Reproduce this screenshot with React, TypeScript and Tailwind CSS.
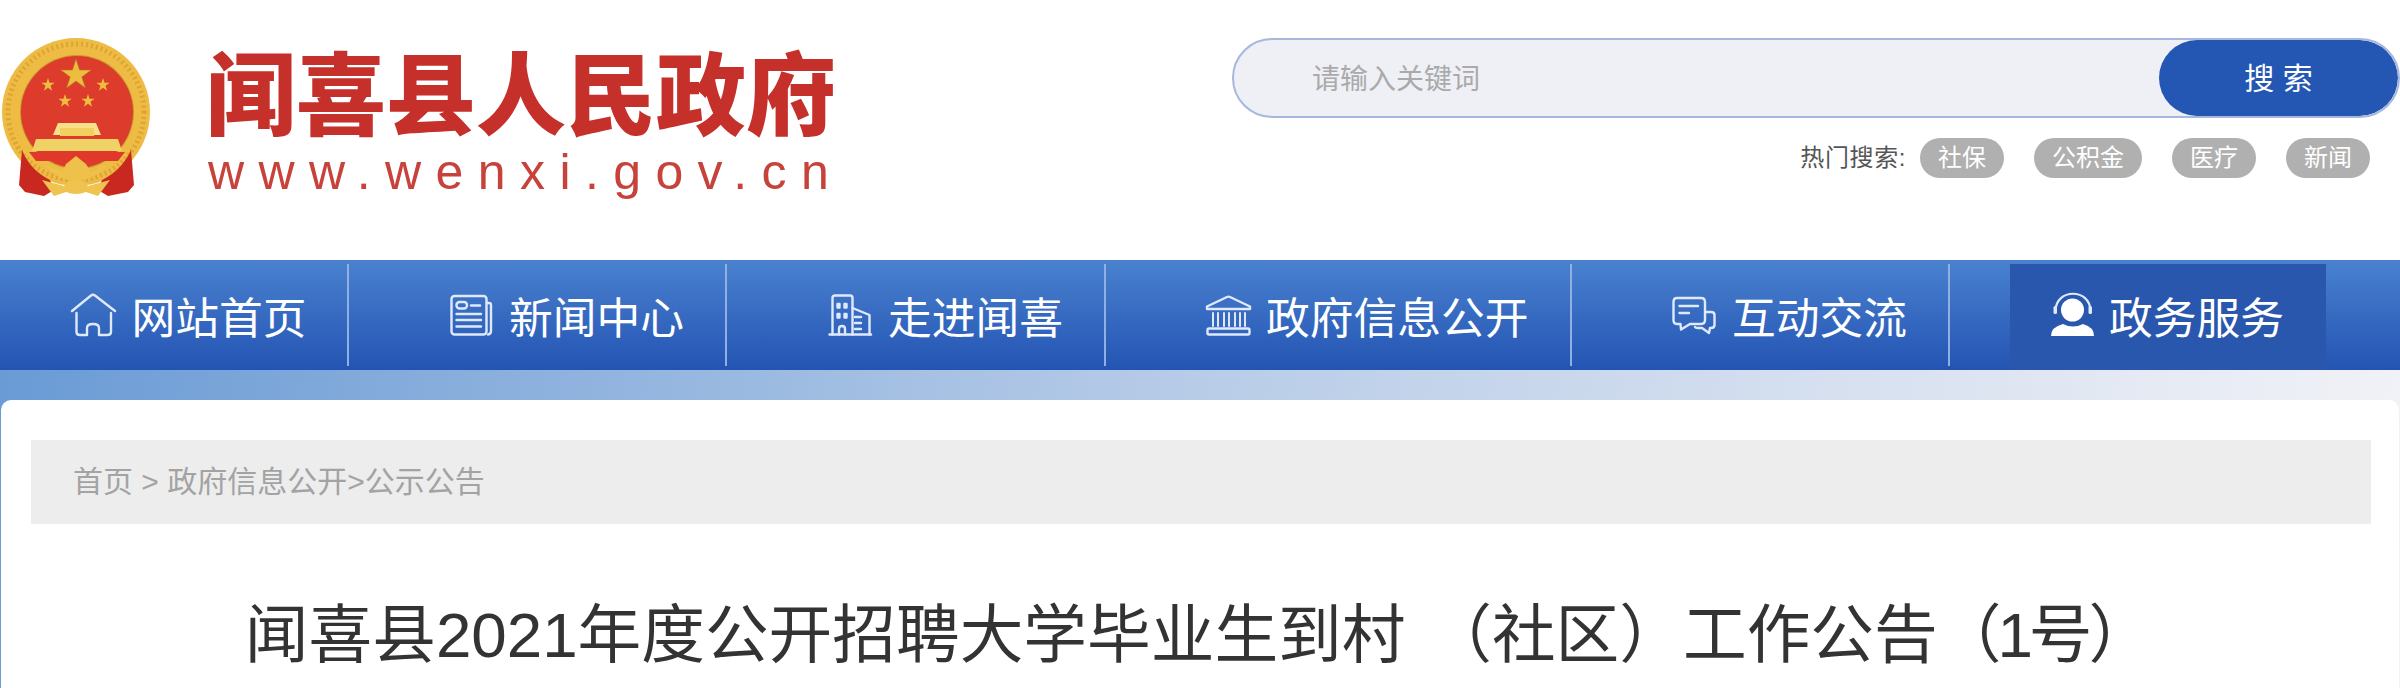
const FONT = "font-['Liberation_Sans','Noto_Sans_CJK_SC',sans-serif]";

function starPoints(cx: number, cy: number, r: number, rot = 0) {
  const pts: string[] = [];
  for (let i = 0; i < 10; i++) {
    const rad = i % 2 === 0 ? r : r * 0.38;
    const a = -Math.PI / 2 + (i * Math.PI) / 5 + rot;
    pts.push(`${(cx + rad * Math.cos(a)).toFixed(2)},${(cy + rad * Math.sin(a)).toFixed(2)}`);
  }
  return pts.join(" ");
}

function Emblem() {
  return (
    <svg viewBox="2 18 148 162" className="w-[148px] h-[162px] ml-[2px] shrink-0 blur-[0.7px]">
      <circle cx="76" cy="92" r="74" fill="#eebc45" />
      <circle cx="76" cy="92" r="68" fill="none" stroke="#dca52f" strokeWidth="5" strokeDasharray="2 3" />
      <circle cx="77" cy="92" r="57" fill="#c9962c" />
      <circle cx="77" cy="92" r="56" fill="#dd3b2c" />
      <polygon points={starPoints(76, 55, 16)} fill="#eebc3f" stroke="#a9801f" strokeWidth="0.6" />
      <polygon points={starPoints(48, 65, 7)} fill="#eebc3f" />
      <polygon points={starPoints(103, 65, 7)} fill="#eebc3f" />
      <polygon points={starPoints(65, 81, 7)} fill="#eebc3f" />
      <polygon points={starPoints(88, 81, 7)} fill="#eebc3f" />
      <path d="M53 115 L58 103 H96 L101 115 Z" fill="#f6e08a" />
      <rect x="60" y="108" width="34" height="8" fill="#f3cf62" />
      <path d="M32 131 L36 119 H118 L122 131 Z" fill="#f1d266" />
      <path d="M29 132 H125 L118 141 H36 Z" fill="#e0392b" />
      <path d="M62 152 L66 144 L76 136 L86 144 L91 152 L108 144 Q96 160 76 161 Q56 160 44 144 Z" fill="#efc04a" />
      <path d="M22 130 Q30 150 50 160 L54 170 L44 176 L25 172 L19 165 Z" fill="#c8281f" />
      <path d="M131 130 Q122 150 102 160 L98 170 L108 176 L128 172 L134 165 Z" fill="#c8281f" />
      <path d="M42 160 L64 166 Q76 152 88 166 L110 160 L98 176 L86 172 Q76 176 66 172 L54 176 Z" fill="#f0c24f" />
    </svg>
  );
}

const strokeProps = {
  fill: "none",
  stroke: "#dfe9fb",
  strokeWidth: 2.4,
  strokeLinecap: "round" as const,
  strokeLinejoin: "round" as const,
};

function HomeIcon() {
  return (
    <svg viewBox="9 12 47 46" className="w-[47px] h-[46px] blur-[0.4px]" {...strokeProps}>
      <path d="M11 31 L30 15.5 Q32 14 34 15.5 L54 31" />
      <path d="M15.5 33 V52 Q15.5 55 19 55 H26 V48 Q26 44 32 44 Q38 44 38 48 V55 H46 Q50 55 50 52 V33" />
    </svg>
  );
}

function NewsIcon() {
  return (
    <svg viewBox="9 12 44 44" className="w-[44px] h-[44px] blur-[0.4px]" {...strokeProps}>
      <rect x="11.5" y="15" width="35" height="38.5" rx="3" />
      <path d="M47 22 H49 Q51 22 51 24 V50 Q51 53 48 53.5" />
      <rect x="16.5" y="21" width="10.5" height="6.5" rx="3" />
      <path d="M31 24.5 H40" />
      <path d="M16.5 33 H41 M16.5 39 H41 M16.5 45.5 H41" />
    </svg>
  );
}

function BuildingIcon() {
  return (
    <svg viewBox="12 13 45 44" className="w-[45px] h-[44px] blur-[0.4px]" {...strokeProps}>
      <path d="M13.5 54.5 H55" />
      <path d="M16.5 54.5 V18 Q16.5 15.5 19 15.5 H34 Q36.5 15.5 36.5 18 V54.5" />
      <path d="M36.5 28 L53.5 35 V54.5" />
      <path d="M39 37 H45 M39 43 H45 M39 49 H45" />
      <path d="M21.5 24 H23.5 V27.5 H21.5 Z M28.5 24 H30.5 V27.5 H28.5 Z M21.5 34 H23.5 V37.5 H21.5 Z M28.5 34 H30.5 V37.5 H28.5 Z" />
      <path d="M23 54.5 V49 Q23 46 26 46 Q29 46 29 49 V54.5" />
    </svg>
  );
}

function BankIcon() {
  return (
    <svg viewBox="9 12 47 43" className="w-[47px] h-[43px] blur-[0.4px]" {...strokeProps}>
      <path d="M11 27 V24.5 L31 15 Q32.5 14.3 34 15 L54 24.5 V27 Z" />
      <path d="M17 31 V44 M22 31 V44 M28 31 V44 M33 31 V44 M39 31 V44 M44 31 V44 M49 31 V44" strokeWidth="2" />
      <rect x="11.5" y="46.5" width="42" height="6" rx="1.5" />
    </svg>
  );
}

function ChatIcon() {
  return (
    <svg viewBox="10 15 46 41" className="w-[46px] h-[41px] blur-[0.4px]" {...strokeProps}>
      <path d="M16 18 H40 Q44 18 44 22 V40 Q44 44 40 44 H29 L20 49.5 L19.5 44 H16 Q12.5 44 12.5 40 V22 Q12.5 18 16 18 Z" />
      <path d="M45 32 H50 Q53.5 32 53.5 35 V45 Q53.5 48 50 48 H49 L48 53 L41 48 H37 Q34.5 48 34 47" />
      <path d="M18.5 26 H37" />
      <path d="M18.5 33 H28" />
    </svg>
  );
}

function PersonIcon() {
  return (
    <svg viewBox="9 12 45 46" className="w-[45px] h-[46px] blur-[0.4px]">
      <circle cx="31.5" cy="30" r="11.5" fill="#ffffff" />
      <path d="M10 56 Q10 47 22 44 Q32 49 42 44 Q53 47 53 56 Z" fill="#ffffff" />
      <path d="M14.5 31 C14.5 8 49.5 8 49.5 31" fill="none" stroke="#dfe9fb" strokeWidth="2.2" />
      <rect x="12.5" y="26" width="3.5" height="8" rx="1.5" fill="#dfe9fb" />
      <rect x="47.5" y="26" width="3.5" height="8" rx="1.5" fill="#dfe9fb" />
    </svg>
  );
}

const navItems = [
  { label: "网站首页", Icon: HomeIcon, cls: "pl-[70px] pr-[40px] gap-[14.5px]" },
  { label: "新闻中心", Icon: NewsIcon, cls: "pl-[100px] pr-[41px] gap-[16.5px]" },
  { label: "走进闻喜", Icon: BuildingIcon, cls: "pl-[100.5px] pr-[40.5px] gap-[15.5px]" },
  { label: "政府信息公开", Icon: BankIcon, cls: "pl-[99px] pr-[41px] gap-[14.5px]" },
  { label: "互动交流", Icon: ChatIcon, cls: "pl-[99px] pr-[40.5px] gap-[15.5px]" },
];

const hotTags = ["社保", "公积金", "医疗", "新闻"];

export default function App() {
  return (
    <div className={`${FONT} w-[2400px] h-[688px] overflow-hidden bg-white`}>
      <header className="h-[260px] flex justify-between items-start pt-[38px] bg-white">
        <div className="flex items-start">
          <Emblem />
          <div className="ml-[56px] flex flex-col">
            <div className="text-[90px] leading-[90px] mt-[6px] font-black text-[#c5302a] font-['Noto_Sans_CJK_SC',sans-serif] whitespace-nowrap blur-[0.5px]">
              闻喜县人民政府
            </div>
            <div className="text-[50px] leading-[56px] mt-[10px] ml-[2px] text-[#c8423c] tracking-[14.4px] whitespace-nowrap blur-[0.3px]">
              www.wenxi.gov.cn
            </div>
          </div>
        </div>
        <div className="flex flex-col items-end">
          <div className="w-[1168px] h-[80px] rounded-full border-2 border-[#a6b7dd] bg-[#eef0f6] flex items-center justify-between overflow-hidden">
            <span className="ml-[78px] mt-[4px] text-[28px] text-[#aaaaaa]">请输入关键词</span>
            <span className="w-[239px] h-[76px] rounded-full bg-[#2456b4] text-white text-[30px] flex items-center justify-center whitespace-pre">
              搜 索
            </span>
          </div>
          <div className="mt-[20px] mr-[30px] flex items-center h-[40px]">
            <span className="text-[24px] tracking-[0.6px] text-[#555555] mr-[14px]">热门搜索:</span>
            <div className="flex gap-[30px]">
              {hotTags.map((t) => (
                <span key={t} className="h-[40px] px-[18px] rounded-full bg-[#b0b0b0] text-white text-[24px] flex items-center">
                  {t}
                </span>
              ))}
            </div>
          </div>
        </div>
      </header>

      <nav className="h-[110px] pt-[4px] flex bg-gradient-to-b from-[#4a81cf] to-[#2454b3] text-white">
        {navItems.map(({ label, Icon, cls }) => (
          <div key={label} className={`h-[102px] flex items-center text-[43.75px] whitespace-nowrap border-r-2 border-[#8fb0e0] ${cls}`}>
            <Icon />
            <span className="pt-[8px]">{label}</span>
          </div>
        ))}
        <div className="ml-[60px] h-[106px] pb-[4px] pl-[40px] pr-[41.5px] bg-[#2a57ae] flex items-center gap-[14.5px] text-[43.75px] whitespace-nowrap">
          <PersonIcon />
          <span className="pt-[8px]">政务服务</span>
        </div>
      </nav>

      <main className="h-[318px] pt-[30px] px-px bg-[linear-gradient(98deg,#6a9bd5_0%,#b9cde8_50%,#f3f3f7_100%)]">
        <div className="h-full rounded-t-[10px] bg-white pt-[40px] pl-[30px] pr-[28px]">
          <div className="h-[84px] bg-[#ededed] pl-[42px] pb-[2px] flex items-center text-[30px] text-[#a3a3a3] whitespace-pre">
            首页 &gt; 政府信息公开&gt;公示公告
          </div>
          <h1 className="mt-[67px] pr-[9px] text-center text-[63.7px] leading-[88px] font-normal text-[#333333] whitespace-pre [word-spacing:5px]">
            闻喜县2021年度公开招聘大学毕业生到村 （社区）工作公告<span className="tracking-[-4px]">（1号）</span>
          </h1>
        </div>
      </main>
    </div>
  );
}
